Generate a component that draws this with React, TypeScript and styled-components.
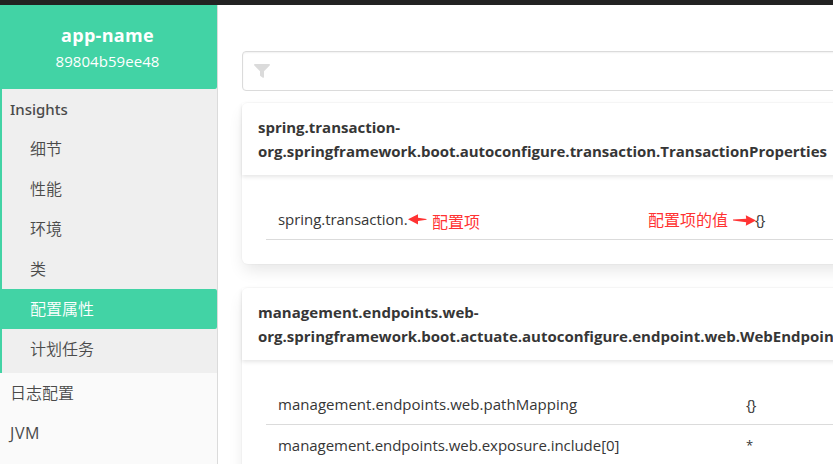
import React from "react";
import styled, { createGlobalStyle } from "styled-components";

const GlobalStyle = createGlobalStyle`
  *, *::before, *::after { box-sizing: border-box; }
  html, body { margin: 0; overflow: hidden; background: #fff; }
  body {
    font-family: "Open Sans", "Noto Sans CJK SC", sans-serif;
    font-size: 16px;
    line-height: 24px;
    color: #363636;
  }
`;

const Page = styled.div`
  height: 100vh;
  display: flex;
  flex-direction: column;
  overflow: hidden;
`;

const Navbar = styled.div`
  flex: 0 0 5px;
  background: #222;
`;

const Body = styled.div`
  flex: 1;
  min-height: 0;
  display: flex;
`;

const Sidebar = styled.aside`
  flex: 0 0 218px;
  background: #fafafa;
  border-right: 1px solid #dbdbdb;
  color: #4a4a4a;
`;

const Instance = styled.div`
  height: 84px;
  padding: 17px 2px 0 0;
  background: #42d3a5;
  border-bottom-right-radius: 2px;
  color: #fff;
  text-align: center;
`;

const AppName = styled.div`
  font-size: 18px;
  font-weight: 700;
  line-height: 27px;
  letter-spacing: 0.3px;
`;

const InstanceId = styled.div`
  font-size: 15px;
  letter-spacing: 0.05px;
`;

const Group = styled.div`
  height: 284px;
  background: #efefef;
  box-shadow: inset 2px 0 #42d3a5;
`;

const NavLink = styled.div<{ $level?: number; $active?: boolean; $kind?: "title" | "latin" }>`
  height: 40px;
  padding: 8px 10px 8px ${(p) => (p.$level ? 30 : 10)}px;
  border-radius: 0 2px 2px 0;
  background: ${(p) => (p.$active ? "#42d3a5" : "transparent")};
  color: ${(p) => (p.$active ? "#fff" : "#4a4a4a")};
  font-family: ${(p) => (p.$kind === "title" ? '"Noto Sans", ' : "")}"Open Sans", "Noto Sans CJK SC", sans-serif;
  font-size: ${(p) => (p.$kind === "title" ? 15 : 16)}px;
  font-weight: ${(p) => (p.$kind === "title" ? 500 : p.$kind === "latin" ? 400 : 350)};
  letter-spacing: ${(p) => (p.$kind === "latin" ? 0.6 : 0)}px;
`;

const Content = styled.main`
  flex: 1;
  min-width: 0;
  padding: 46px 0 0 24px;
  overflow: hidden;
`;

const FilterBox = styled.div`
  width: 900px;
  height: 40px;
  margin-bottom: 12px;
  padding-left: 11px;
  display: flex;
  align-items: center;
  border: 1px solid #dbdbdb;
  border-radius: 4px;
  box-shadow: inset 0 1px 2px rgba(10, 10, 10, 0.06);
`;

const Card = styled.section`
  width: 900px;
  margin-bottom: 24px;
  border-radius: 6px;
  background: #fff;
  box-shadow: 0 8px 16px -2px rgba(10, 10, 10, 0.1), 0 0 0 1px rgba(10, 10, 10, 0.02);
`;

const CardHeader = styled.header`
  padding: 12px 16px;
  font-size: 15px;
  font-weight: 700;
  box-shadow: 0 2px 4px rgba(10, 10, 10, 0.1);
  white-space: nowrap;
`;

const HeadLine = styled.div<{ $track?: number }>`
  letter-spacing: ${(p) => p.$track ?? 0}px;
`;

const Rows = styled.div`
  padding: 24px;
`;

const Row = styled.div`
  height: 41px;
  padding: 8px 12px;
  display: grid;
  grid-template-columns: 468px 1fr;
  border-bottom: 1px solid #dbdbdb;
`;

const Cell = styled.div<{ $track?: number; $indent?: number; $size?: number }>`
  position: relative;
  padding-left: ${(p) => p.$indent ?? 0}px;
  font-size: ${(p) => p.$size ?? 15}px;
  letter-spacing: ${(p) => p.$track ?? 0}px;
  white-space: nowrap;
`;

const Note = styled.span<{ $left: number; $top: number }>`
  position: absolute;
  left: ${(p) => p.$left}px;
  top: ${(p) => p.$top}px;
  color: #ff3333;
  font-size: 16px;
  letter-spacing: 0;
`;

const NoteArrow = styled.svg<{ $left: number; $top: number }>`
  position: absolute;
  left: ${(p) => p.$left}px;
  top: ${(p) => p.$top}px;
  fill: #ff3333;
`;

const FunnelIcon = () => (
  <svg width="16" height="14" viewBox="0 0 16 14" fill="#dbdbdb">
    <path d="M0.7 0H15.3Q16.3 0.4 15.7 1.4L10 7.3V13.1Q9.8 14.2 8.8 13.8L6.4 12Q6 11.7 6 11.2V7.3L0.3 1.4Q-0.3 0.4 0.7 0Z" />
  </svg>
);

const insights = ["细节", "性能", "环境", "类", "配置属性", "计划任务"];

export default function App() {
  return (
    <Page>
      <GlobalStyle />
      <Navbar />
      <Body>
        <Sidebar>
          <Instance>
            <AppName>app-name</AppName>
            <InstanceId>89804b59ee48</InstanceId>
          </Instance>
          <Group>
            <NavLink $kind="title">Insights</NavLink>
            {insights.map((label) => (
              <NavLink key={label} $level={1} $active={label === "配置属性"}>
                {label}
              </NavLink>
            ))}
          </Group>
          <NavLink>日志配置</NavLink>
          <NavLink $kind="latin">JVM</NavLink>
        </Sidebar>
        <Content>
          <FilterBox>
            <FunnelIcon />
          </FilterBox>
          <Card>
            <CardHeader>
              <HeadLine $track={-0.02}>spring.transaction-</HeadLine>
              <HeadLine $track={-0.02}>
                org.springframework.boot.autoconfigure.transaction.TransactionProperties
              </HeadLine>
            </CardHeader>
            <Rows>
              <Row>
                <Cell $track={-0.05}>
                  spring.transaction.
                  <NoteArrow $left={130} $top={7} width="19" height="11" viewBox="0 0 19 11">
                    <path d="M0 5.3L10 0.3V3.7L18.5 5V5.8L10 7.1V10.4Z" />
                  </NoteArrow>
                  <Note $left={154} $top={3}>配置项</Note>
                  <Note $left={370} $top={1}>配置项的值</Note>
                </Cell>
                <Cell $indent={9} $track={-1}>
                  <NoteArrow $left={-13} $top={8} width="23" height="11" viewBox="0 0 23 11">
                    <path d="M23 5.5L12.8 0.3L13.2 3.8L0 4.6V5.5L13.2 7.3L12.8 10.7Z" />
                  </NoteArrow>
                  {"{}"}
                </Cell>
              </Row>
            </Rows>
          </Card>
          <Card>
            <CardHeader>
              <HeadLine $track={0.03}>management.endpoints.web-</HeadLine>
              <HeadLine>
                org.springframework.boot.actuate.autoconfigure.endpoint.web.WebEndpointProperties
              </HeadLine>
            </CardHeader>
            <Rows>
              <Row>
                <Cell $track={0.03}>management.endpoints.web.pathMapping</Cell>
                <Cell $track={-1}>{"{}"}</Cell>
              </Row>
              <Row>
                <Cell $track={-0.04}>management.endpoints.web.exposure.include[0]</Cell>
                <Cell $size={13}>*</Cell>
              </Row>
            </Rows>
          </Card>
        </Content>
      </Body>
    </Page>
  );
}
